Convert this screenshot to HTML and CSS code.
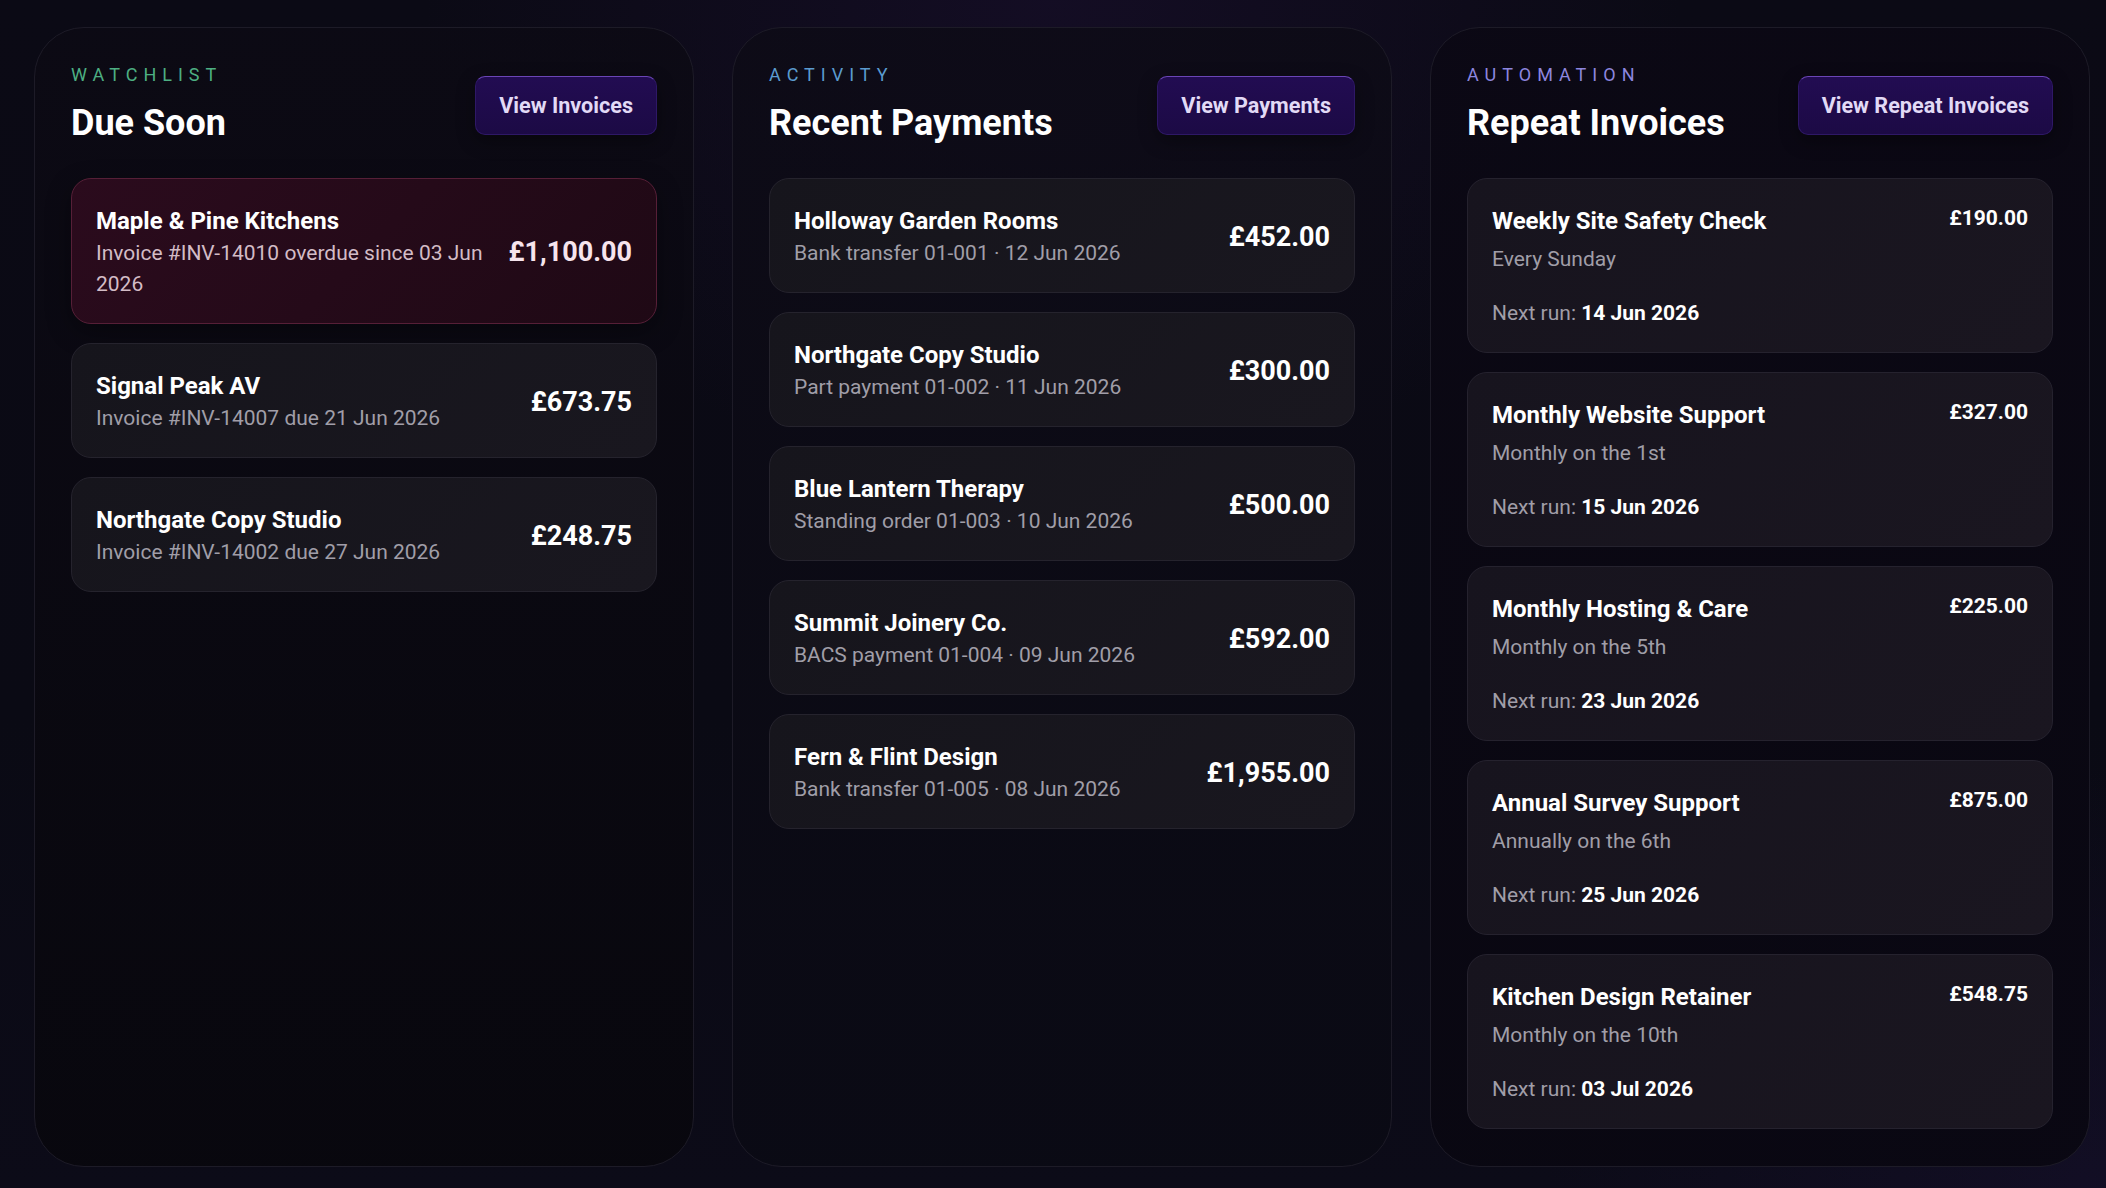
FILE: index.html
```html
<!DOCTYPE html>
<html lang="en">
<head>
<meta charset="utf-8">
<title>Dashboard</title>
<link rel="stylesheet" href="styles.css">
</head>
<body>
<main class="board">
  <section class="panel panel-watch">
    <header class="panel-head">
      <div class="titles">
        <div class="eyebrow eyebrow-green">WATCHLIST</div>
        <h2 class="title">Due Soon</h2>
      </div>
      <button class="btn">View Invoices</button>
    </header>
    <div class="list">
      <div class="row row-alert">
        <div class="info">
          <div class="name">Maple &amp; Pine Kitchens</div>
          <div class="sub">Invoice #INV-14010 overdue since 03 Jun 2026</div>
        </div>
        <div class="amount">£1,100.00</div>
      </div>
      <div class="row">
        <div class="info">
          <div class="name">Signal Peak AV</div>
          <div class="sub">Invoice #INV-14007 due 21 Jun 2026</div>
        </div>
        <div class="amount">£673.75</div>
      </div>
      <div class="row">
        <div class="info">
          <div class="name">Northgate Copy Studio</div>
          <div class="sub">Invoice #INV-14002 due 27 Jun 2026</div>
        </div>
        <div class="amount">£248.75</div>
      </div>
    </div>
  </section>

  <section class="panel panel-activity">
    <header class="panel-head">
      <div class="titles">
        <div class="eyebrow eyebrow-blue">ACTIVITY</div>
        <h2 class="title">Recent Payments</h2>
      </div>
      <button class="btn">View Payments</button>
    </header>
    <div class="list">
      <div class="row">
        <div class="info">
          <div class="name">Holloway Garden Rooms</div>
          <div class="sub">Bank transfer 01-001 · 12 Jun 2026</div>
        </div>
        <div class="amount">£452.00</div>
      </div>
      <div class="row">
        <div class="info">
          <div class="name">Northgate Copy Studio</div>
          <div class="sub">Part payment 01-002 · 11 Jun 2026</div>
        </div>
        <div class="amount">£300.00</div>
      </div>
      <div class="row">
        <div class="info">
          <div class="name">Blue Lantern Therapy</div>
          <div class="sub">Standing order 01-003 · 10 Jun 2026</div>
        </div>
        <div class="amount">£500.00</div>
      </div>
      <div class="row">
        <div class="info">
          <div class="name">Summit Joinery Co.</div>
          <div class="sub">BACS payment 01-004 · 09 Jun 2026</div>
        </div>
        <div class="amount">£592.00</div>
      </div>
      <div class="row">
        <div class="info">
          <div class="name">Fern &amp; Flint Design</div>
          <div class="sub">Bank transfer 01-005 · 08 Jun 2026</div>
        </div>
        <div class="amount">£1,955.00</div>
      </div>
    </div>
  </section>

  <section class="panel panel-auto">
    <header class="panel-head">
      <div class="titles">
        <div class="eyebrow eyebrow-purple">AUTOMATION</div>
        <h2 class="title">Repeat Invoices</h2>
      </div>
      <button class="btn">View Repeat Invoices</button>
    </header>
    <div class="list">
      <div class="repeat">
        <div class="repeat-top">
          <div class="name">Weekly Site Safety Check</div>
          <div class="amount-sm">£190.00</div>
        </div>
        <div class="schedule">Every Sunday</div>
        <div class="next">Next run: <strong>14 Jun 2026</strong></div>
      </div>
      <div class="repeat">
        <div class="repeat-top">
          <div class="name">Monthly Website Support</div>
          <div class="amount-sm">£327.00</div>
        </div>
        <div class="schedule">Monthly on the 1st</div>
        <div class="next">Next run: <strong>15 Jun 2026</strong></div>
      </div>
      <div class="repeat">
        <div class="repeat-top">
          <div class="name">Monthly Hosting &amp; Care</div>
          <div class="amount-sm">£225.00</div>
        </div>
        <div class="schedule">Monthly on the 5th</div>
        <div class="next">Next run: <strong>23 Jun 2026</strong></div>
      </div>
      <div class="repeat">
        <div class="repeat-top">
          <div class="name">Annual Survey Support</div>
          <div class="amount-sm">£875.00</div>
        </div>
        <div class="schedule">Annually on the 6th</div>
        <div class="next">Next run: <strong>25 Jun 2026</strong></div>
      </div>
      <div class="repeat">
        <div class="repeat-top">
          <div class="name">Kitchen Design Retainer</div>
          <div class="amount-sm">£548.75</div>
        </div>
        <div class="schedule">Monthly on the 10th</div>
        <div class="next">Next run: <strong>03 Jul 2026</strong></div>
      </div>
    </div>
  </section>
</main>
</body>
</html>
```
FILE: styles.css
```css
* { box-sizing: border-box; }

html, body {
  margin: 0;
  height: 100%;
}

body {
  font-family: Roboto, "Liberation Sans", Arial, sans-serif;
  color: #ffffff;
  background:
    radial-gradient(ellipse 900px 700px at 50% 0%, rgba(40, 20, 70, 0.3), transparent 70%),
    radial-gradient(ellipse 800px 600px at 100% 100%, rgba(30, 20, 60, 0.35), transparent 70%),
    linear-gradient(180deg, #0b0a15 0%, #0a0a14 60%, #0c0b18 100%);
  overflow: hidden;
}

.board {
  display: grid;
  grid-template-columns: repeat(3, 660px);
  column-gap: 38px;
  align-items: stretch;
  padding: 27px 16px 22px 34px;
}

.panel {
  border: 1px solid #1d1b27;
  border-radius: 50px;
  padding: 37px 36px 37px 36px;
  background: linear-gradient(180deg, rgba(12, 10, 20, 0.85) 0%, rgba(8, 7, 13, 0.9) 100%);
}

.panel-activity {
  background: linear-gradient(180deg, rgba(13, 11, 22, 0.85) 0%, rgba(10, 10, 20, 0.9) 100%);
}

.panel-auto {
  background: linear-gradient(180deg, rgba(11, 8, 20, 0.9) 0%, rgba(9, 7, 17, 0.9) 100%);
}

.panel-head {
  display: flex;
  justify-content: space-between;
  align-items: center;
  margin-bottom: 33px;
}

.eyebrow {
  font-size: 18px;
  line-height: 20px;
  letter-spacing: 6px;
  margin-bottom: 17px;
}

.eyebrow-green { color: #4daf83; }
.eyebrow-blue { color: #5b9bcf; }
.eyebrow-purple { color: #8d86df; }

.title {
  margin: 0;
  font-size: 36px;
  line-height: 43px;
  font-weight: 700;
  color: #ffffff;
}

.btn {
  font-family: inherit;
  font-size: 21.6px;
  line-height: 25px;
  font-weight: 700;
  color: #e2daf6;
  padding: 16px 23px;
  border-radius: 10px;
  border: 1px solid #2e1866;
  border-top-color: #6a45b6;
  background: linear-gradient(180deg, #220c52 0%, #1c0a45 100%);
  box-shadow: 0 6px 18px rgba(0, 0, 0, 0.35);
  cursor: pointer;
}

.list {
  display: flex;
  flex-direction: column;
  gap: 19px;
}

.row {
  display: flex;
  align-items: center;
  gap: 20px;
  padding: 27px 24px 23px 24px;
  border: 1px solid #25232d;
  border-radius: 20px;
  background: linear-gradient(135deg, #16151c 0%, #19171f 100%);
}

.row-alert {
  border-color: #561f37;
  background: linear-gradient(135deg, #2b0b1d 0%, #1f0915 100%);
  box-shadow: 0 8px 24px rgba(0, 0, 0, 0.35);
}

.info {
  flex: 1;
  min-width: 0;
}

.name {
  font-size: 24px;
  line-height: 30px;
  font-weight: 700;
  color: #ffffff;
}

.sub {
  margin-top: 2px;
  font-size: 21px;
  line-height: 31px;
  color: #a09ea8;
}

.row-alert .sub { color: #d3bcc6; }

.amount {
  flex: none;
  font-size: 27px;
  line-height: 32px;
  font-weight: 700;
  color: #ffffff;
  margin-bottom: 2px;
}

.row-alert .amount { color: #f6e4ed; }

.repeat {
  padding: 27px 24px 23px 24px;
  border: 1px solid #25222e;
  border-radius: 20px;
  background: linear-gradient(135deg, #17141e 0%, #1a1620 100%);
}

.repeat-top {
  display: flex;
  justify-content: space-between;
  align-items: flex-start;
  gap: 20px;
}

.amount-sm {
  flex: none;
  font-size: 21px;
  line-height: 25px;
  font-weight: 700;
  color: #ffffff;
}

.schedule {
  margin-top: 8px;
  font-size: 21px;
  line-height: 31px;
  color: #a09ea8;
}

.next {
  margin-top: 23px;
  font-size: 21px;
  line-height: 31px;
  color: #a09ea8;
}

.next strong {
  color: #ffffff;
  font-weight: 700;
}
```
